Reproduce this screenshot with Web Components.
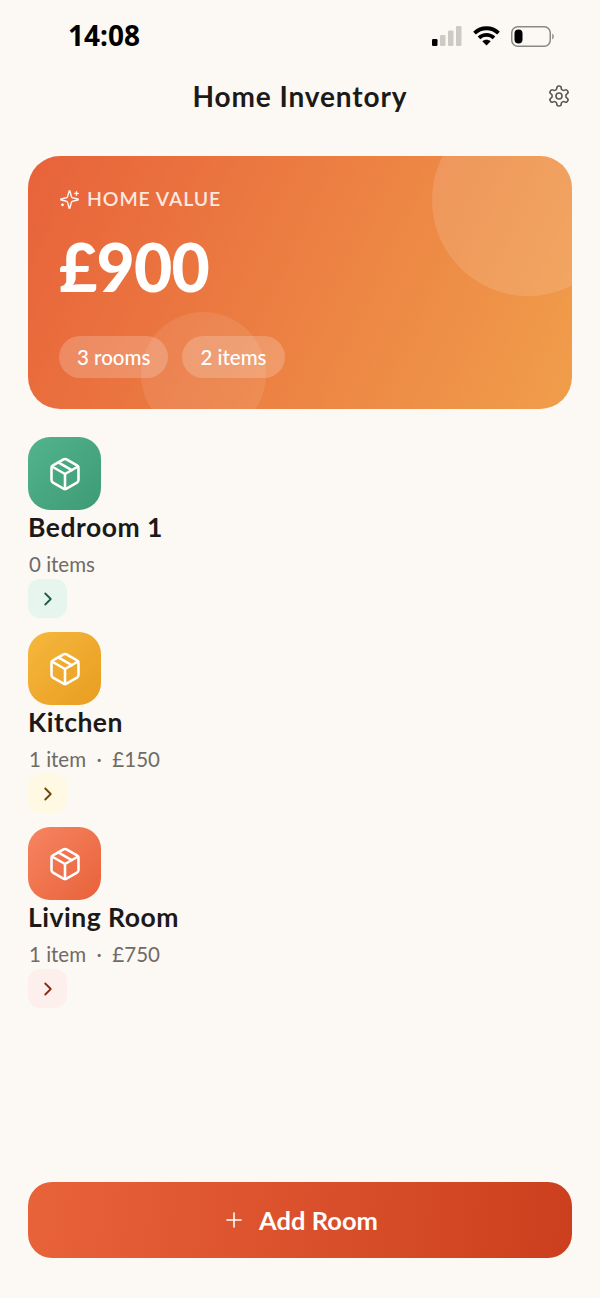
<!DOCTYPE html>
<html lang="en"><head><meta charset="utf-8"><title>Home Inventory</title>
<style>
html,body{margin:0;padding:0;background:#FCF8F3}
body{font-family:"Lato","Noto Sans",sans-serif;color:#1c1a18;width:600px;height:1298px;overflow:hidden}
app-shell{height:1298px}
</style></head><body>
<app-shell>
  <status-bar slot="status" time="14:08"></status-bar>
  <app-header slot="header">Home Inventory</app-header>
  <value-card slot="card" amount="£900">
    <stat-pill>3 rooms</stat-pill>
    <stat-pill>2 items</stat-pill>
  </value-card>
  <room-row name="Bedroom 1" meta="0 items" c1="#52B48C" c2="#3E9A76" tint="#E6F5EE" ink="#1F5C46"></room-row>
  <room-row name="Kitchen" meta="1 item&nbsp; ·&nbsp; £150" c1="#F5B83D" c2="#E89D20" tint="#FFF8E3" ink="#6B4508"></room-row>
  <room-row name="Living Room" meta="1 item&nbsp; ·&nbsp; £750" c1="#F68561" c2="#E8623A" tint="#FDF0EC" ink="#8A2A14"></room-row>
  <add-button slot="footer">Add Room</add-button>
</app-shell>
<script>
const FONT='"Lato","Noto Sans",sans-serif';
function def(name,css,html,init){
  customElements.define(name,class extends HTMLElement{
    connectedCallback(){
      if(this.shadowRoot)return;
      const r=this.attachShadow({mode:'open'});
      const a=n=>this.getAttribute(n)||'';
      r.innerHTML='<style>'+css+'</style>'+(typeof html==='function'?html(a):html);
    }
  });
}
const ico=(size,sw,color,inner)=>`<svg width="${size}" height="${size}" viewBox="0 0 24 24" fill="none" stroke="${color}" stroke-width="${sw}" stroke-linecap="round" stroke-linejoin="round" aria-hidden="true">${inner}</svg>`;
const PKG='<path d="m7.5 4.27 9 5.15"/><path d="M21 8a2 2 0 0 0-1-1.73l-7-4a2 2 0 0 0-2 0l-7 4A2 2 0 0 0 3 8v8a2 2 0 0 0 1 1.73l7 4a2 2 0 0 0 2 0l7-4A2 2 0 0 0 21 16Z"/><path d="m3.3 7 8.7 5 8.7-5"/><path d="M12 22V12"/>';
const GEAR='<path d="M12.22 2h-.44a2 2 0 0 0-2 2v.18a2 2 0 0 1-1 1.73l-.43.25a2 2 0 0 1-2 0l-.15-.08a2 2 0 0 0-2.73.73l-.22.38a2 2 0 0 0 .73 2.73l.15.1a2 2 0 0 1 1 1.72v.51a2 2 0 0 1-1 1.74l-.15.09a2 2 0 0 0-.73 2.73l.22.38a2 2 0 0 0 2.73.73l.15-.08a2 2 0 0 1 2 0l.43.25a2 2 0 0 1 1 1.73V20a2 2 0 0 0 2 2h.44a2 2 0 0 0 2-2v-.18a2 2 0 0 1 1-1.73l.43-.25a2 2 0 0 1 2 0l.15.08a2 2 0 0 0 2.73-.73l.22-.39a2 2 0 0 0-.73-2.73l-.15-.08a2 2 0 0 1-1-1.74v-.5a2 2 0 0 1 1-1.74l.15-.09a2 2 0 0 0 .73-2.73l-.22-.38a2 2 0 0 0-2.73-.73l-.15.08a2 2 0 0 1-2 0l-.43-.25a2 2 0 0 1-1-1.73V4a2 2 0 0 0-2-2z"/><circle cx="12" cy="12" r="3"/>';
const SPARK='<path d="M9.937 15.5A2 2 0 0 0 8.5 14.063l-6.135-1.582a.5.5 0 0 1 0-.962L8.5 9.936A2 2 0 0 0 9.937 8.5l1.582-6.135a.5.5 0 0 1 .963 0L14.063 8.5A2 2 0 0 0 15.5 9.937l6.135 1.581a.5.5 0 0 1 0 .964L15.5 14.063a2 2 0 0 0-1.437 1.437l-1.582 6.135a.5.5 0 0 1-.963 0z"/><path d="M20 3v4"/><path d="M22 5h-4"/><path d="M4 17v2"/><path d="M5 18H3"/>';

def('app-shell',`:host{display:flex;flex-direction:column;height:100%;box-sizing:border-box}
  .main{padding:0 28px;display:flex;flex-direction:column;gap:28px;flex:1}
  .rooms{display:flex;flex-direction:column;gap:14px}
  .foot{padding:0 28px 40px}`,
  `<slot name="status"></slot><slot name="header"></slot>
   <div class="main"><slot name="card"></slot><div class="rooms"><slot></slot></div></div>
   <div class="foot"><slot name="footer"></slot></div>`);

def('status-bar',`:host{display:flex;height:72px;box-sizing:border-box;padding:18px 46px 0 68px;justify-content:space-between;align-items:flex-start}
  .t{font:700 28px/34px "Noto Sans",sans-serif;color:#000}
  .r{display:flex;align-items:center;gap:11px;height:36px}
  svg{display:block}`,
  a=>`<span class="t">${a('time')}</span><div class="r">
  <svg width="30" height="20" viewBox="0 0 30 20"><rect x="0" y="13" width="5.5" height="7" rx="1.2" fill="#000"/><rect x="8" y="9" width="5.5" height="11" rx="1.2" fill="#cdcac5"/><rect x="16" y="4.5" width="5.5" height="15.5" rx="1.2" fill="#cdcac5"/><rect x="24" y="0" width="5.5" height="20" rx="1.2" fill="#cdcac5"/></svg>
  <svg width="27" height="20" viewBox="0 0 27 20" fill="none" stroke="#000" stroke-width="3.8"><path d="M1.5 7.2C8.3.6 18.700.6 25.500 7.200"/><path d="M6 11.900c4.300-4 10.700-4 15 0"/><path d="M13.500 19.500 9.300 15.300c2.500-2 5.900-2 8.400 0z" fill="#000" stroke="none"/></svg>
  <svg width="43" height="21" viewBox="0 0 43 21"><rect x=".75" y=".75" width="38.500" height="19.500" rx="6" fill="none" stroke="#8b8884" stroke-width="1.500"/><rect x="3.500" y="3.500" width="8" height="14" rx="4" fill="#000"/><path d="M41 7.500c1.400.5 2 1.600 2 3s-.6 2.500-2 3z" fill="#a8a5a0"/></svg>
  </div>`);

def('app-header',`:host{display:flex;align-items:center;justify-content:center;position:relative;height:48px;margin-bottom:36px}
  .t{font:700 28px/48px ${FONT};color:#1c1a18;letter-spacing:.9px}
  .g{position:absolute;right:29px;top:12px;display:block;line-height:0}`,
  `<span class="t"><slot></slot></span><span class="g">${ico(24,1.6,'#5a5651',GEAR)}</span>`);

def('value-card',`:host{display:block;position:relative;overflow:hidden;height:253px;box-sizing:border-box;border-radius:32px;
    background:linear-gradient(115deg,#E8623A 0%,#F09E4B 100%);padding:31px 31px 0;color:#fff}
  .c{position:absolute;border-radius:50%;background:rgba(255,255,255,.13)}
  .c1{width:192px;height:192px;top:-52px;right:-52px}
  .c2{width:125px;height:125px;left:113px;top:156px;background:rgba(255,255,255,.09)}
  .l{position:relative;display:flex;align-items:center;gap:7px;font:600 19.500px/24px ${FONT};letter-spacing:.9px;color:rgba(255,255,255,.85);height:24px}
  .l svg{display:block}
  .a{position:relative;font:900 66px/72px ${FONT};margin-top:20px;letter-spacing:-.8px}
  .p{position:relative;display:flex;gap:14px;margin-top:33px}`,
  a=>`<div class="c c1"></div><div class="c c2"></div>
  <div class="l">${ico(21,1.7,'rgba(255,255,255,.9)',SPARK)}<span>HOME VALUE</span></div>
  <div class="a">${a('amount')}</div><div class="p"><slot></slot></div>`);

def('stat-pill',`:host{display:block;height:42px;padding:0 18px;border-radius:21px;background:rgba(255,255,255,.2);font:500 20.500px/42px ${FONT};color:#fff}`,`<slot></slot>`);

def('room-row',`:host{display:flex;flex-direction:column;align-items:flex-start;height:181px}
  .i{width:73px;height:73px;border-radius:22px;display:flex;align-items:center;justify-content:center}
  .n{font:700 26.500px/36px ${FONT};color:#1c1a18;margin-top:-1px;letter-spacing:.5px}
  .m{font:400 20.500px/26px ${FONT};color:#6f6b66;margin-top:6px;padding-left:1px;white-space:nowrap}
  .b{width:39px;height:39px;border-radius:12px;display:flex;align-items:center;justify-content:center;margin-top:2px}`,
  a=>`<div class="i" style="background:linear-gradient(135deg,${a('c1')},${a('c2')})">${ico(36,1.7,'#fff',PKG)}</div>
  <div class="n">${a('name')}</div><div class="m">${a('meta')}</div>
  <div class="b" style="background:${a('tint')}">${ico(22,2,a('ink'),'<path d="m9 18 6-6-6-6"/>')}</div>`);

def('add-button',`:host{display:flex;align-items:center;justify-content:center;gap:13px;height:76px;border-radius:24px;background:linear-gradient(95deg,#E8623A 0%,#CC3F1E 100%);color:#fff;font:700 25.500px/76px ${FONT}}
  svg{display:block}`,
  `${ico(24,1.6,'#fff','<path d="M5 12h14"/><path d="M12 5v14"/>')}<span><slot></slot></span>`);
</script>
</body></html>
